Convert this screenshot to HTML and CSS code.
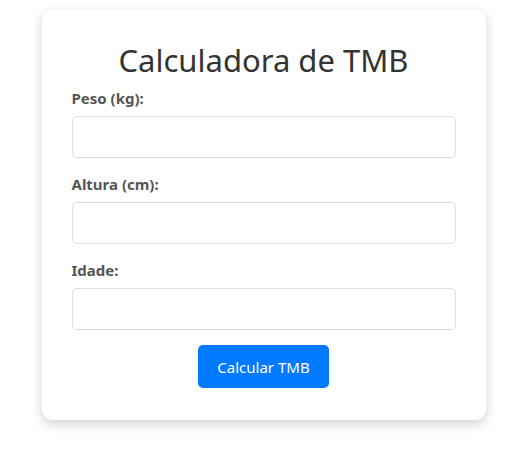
FILE: index.html
```html
<!DOCTYPE html>
<html lang="pt">
<head>
<meta charset="utf-8">
<title>Calculadora de TMB</title>
<link rel="stylesheet" href="styles.css">
</head>
<body>
<div class="card">
  <h1 class="title">Calculadora de TMB</h1>
  <form class="form">
    <label class="label" for="peso">Peso (kg):</label>
    <input class="input" id="peso" type="number">
    <label class="label" for="altura">Altura (cm):</label>
    <input class="input" id="altura" type="number">
    <label class="label" for="idade">Idade:</label>
    <input class="input" id="idade" type="number">
    <button class="btn" type="button">Calcular TMB</button>
  </form>
</div>
</body>
</html>
```
FILE: styles.css
```css
html, body {
  margin: 0;
  padding: 0;
  background: #fff;
}
body {
  font-family: "Noto Sans", "Open Sans", sans-serif;
  display: flex;
  justify-content: center;
  padding: 10px 0 40px;
}
.card {
  width: 384px;
  padding: 30px 30px 32px;
  background: #fff;
  border-radius: 10px;
  box-shadow: 0 4px 12px rgba(0, 0, 0, 0.18);
}
.title {
  margin: 0 0 8px;
  font-size: 31px;
  line-height: 40px;
  font-weight: 400;
  color: #333;
  text-align: center;
}
.form {
  display: flex;
  flex-direction: column;
}
.label {
  font-size: 15px;
  line-height: 20px;
  font-weight: 700;
  color: #555;
  margin-bottom: 8px;
}
.input {
  box-sizing: border-box;
  height: 42px;
  border: 1px solid #ddd;
  border-radius: 5px;
  margin: 0 0 16px;
  padding: 10px;
  font-size: 16px;
}
.btn {
  align-self: center;
  width: 131px;
  height: 43px;
  margin-top: -1px;
  border: 0;
  border-radius: 5px;
  background: #007bff;
  color: #fff;
  font-family: inherit;
  font-size: 15px;
}
```
